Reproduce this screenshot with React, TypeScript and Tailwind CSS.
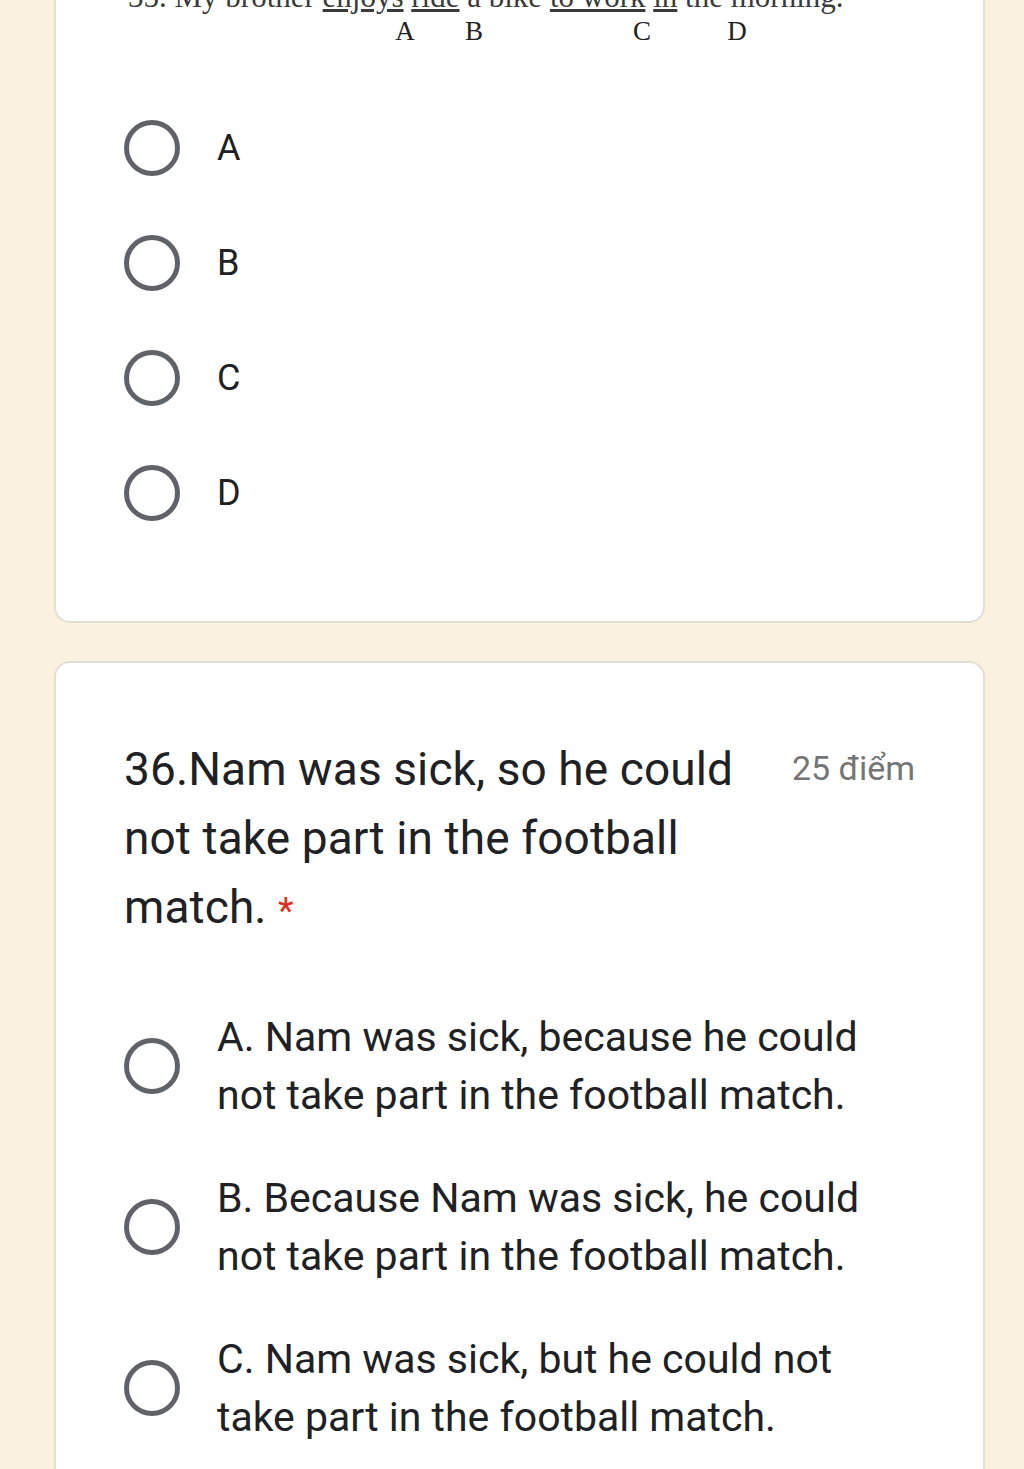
import React from 'react'

const font = { fontFamily: 'Roboto, "Noto Sans", sans-serif' }

function Radio() {
  return <span className="block size-[56px] shrink-0 rounded-full border-[5px] border-[#5f6368]" />
}

const letters = ['A', 'B', 'C', 'D']

const answers = [
  'A. Nam was sick, because he could not take part in the football match.',
  'B. Because Nam was sick, he could not take part in the football match.',
  'C. Nam was sick, but he could not take part in the football match.',
]

export default function App() {
  return (
    <div
      className="h-[1469px] overflow-hidden bg-[#faf1de] pl-[54px] pr-[39px]"
      style={font}
    >
      {/* Previous question, scrolled mostly out of view */}
      <div className="h-[623px] overflow-hidden rounded-b-[16px] border-x-2 border-b-2 border-[#e3dfd6] bg-white">
        <div className="h-[48px] overflow-hidden">
          <div className="-mt-[20px] whitespace-nowrap pl-[72px] font-['Liberation_Serif',serif] text-[31px] leading-[34px] text-[#3a3a3a]">
            35. My brother <span className="underline">enjoys</span> <span className="underline">ride</span> a bike{' '}
            <span className="underline">to work</span> <span className="underline">in</span> the morning.
          </div>
          <div className="flex h-[34px] items-center font-['Liberation_Serif',serif] text-[27px] text-[#222]">
            <span className="ml-[339px] w-[20px] text-center">A</span>
            <span className="ml-[49px] w-[20px] text-center">B</span>
            <span className="ml-[148px] w-[20px] text-center">C</span>
            <span className="ml-[74px] w-[22px] text-center">D</span>
          </div>
        </div>

        <div className="flex flex-col gap-[59px] pl-[68px] pt-[72px]">
          {letters.map((l) => (
            <label key={l} className="flex items-center gap-[37px]">
              <Radio />
              <span className="text-[36px] leading-[56px] text-[#202124]">{l}</span>
            </label>
          ))}
        </div>
      </div>

      {/* Question 36 */}
      <div className="mt-[38px] h-[900px] rounded-t-[16px] border-x-2 border-t-2 border-[#e3dfd6] bg-white px-[68px] pt-[72px]">
        <div className="flex items-start justify-between gap-[30px]">
          <h2 className="w-[640px] text-[46px] leading-[69px] tracking-[0.1px] text-[#202124]">
            36.Nam was sick, so he could not take part in the football match.{' '}
            <span className="text-[36px] text-[#d93025]">*</span>
          </h2>
          <span className="mt-[13px] shrink-0 text-[34px] leading-[40px] text-[#757575]">25 điểm</span>
        </div>

        <div className="mt-[62px] flex flex-col gap-[45px]">
          {answers.map((a) => (
            <label key={a} className="flex items-center gap-[37px]">
              <Radio />
              <span className="w-[670px] text-[41px] leading-[58px] text-[#202124]">{a}</span>
            </label>
          ))}
        </div>
      </div>
    </div>
  )
}
